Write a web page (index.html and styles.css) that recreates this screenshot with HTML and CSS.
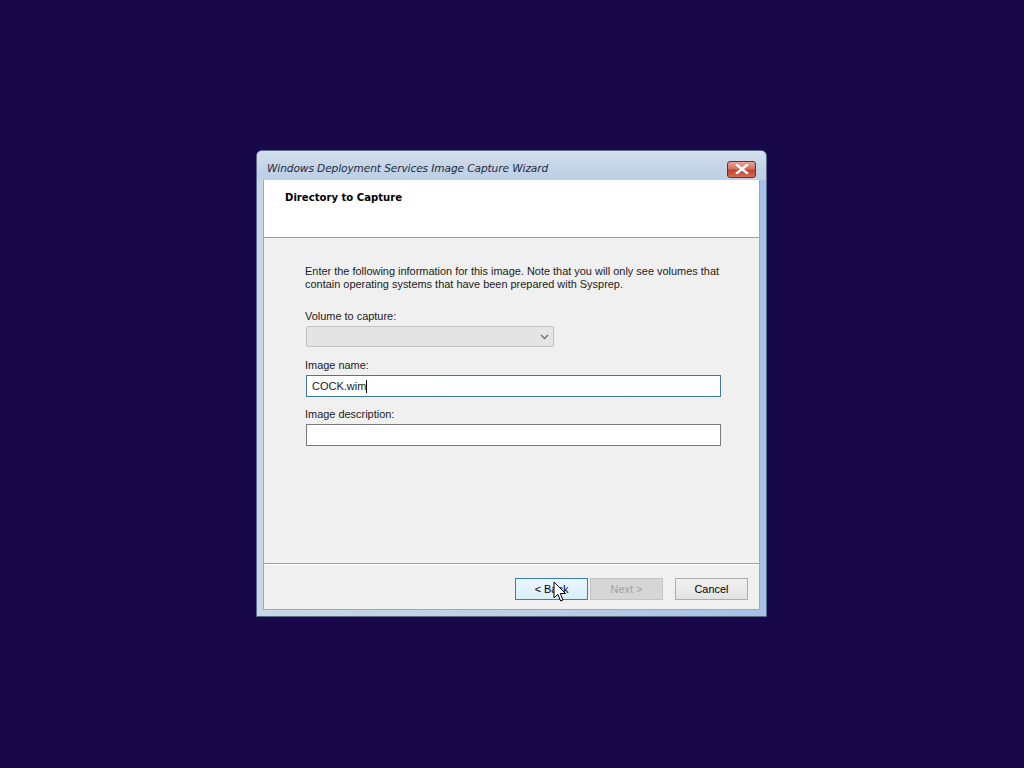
FILE: index.html
```html
<!DOCTYPE html>
<html>
<head>
<meta charset="utf-8">
<title>Windows Deployment Services Image Capture Wizard</title>
<link rel="stylesheet" href="styles.css">
</head>
<body>
<div class="window">
  <div class="titlebar">
    <span class="title">Windows Deployment Services Image Capture Wizard</span>
    <div class="close">
      <svg width="14" height="10" viewBox="0 0 14 10"><path d="M2 1 L12 9 M12 1 L2 9" stroke="#fff" stroke-width="2.4" stroke-linecap="square"/></svg>
    </div>
  </div>
  <div class="client">
    <div class="header">
      <h1 class="heading">Directory to Capture</h1>
    </div>
    <div class="body">
      <p class="intro">Enter the following information for this image. Note that you will only see volumes that contain operating systems that have been prepared with Sysprep.</p>
      <div class="field">
        <label class="label">Volume to capture:</label>
        <div class="combo">
          <svg class="chev" width="9" height="6" viewBox="0 0 9 6"><path d="M1 1 L4.5 4.5 L8 1" fill="none" stroke="#6d6d6d" stroke-width="1.3"/></svg>
        </div>
      </div>
      <div class="field">
        <label class="label">Image name:</label>
        <div class="textbox focused"><span class="value">COCK.wim</span><span class="caret"></span></div>
      </div>
      <div class="field">
        <label class="label">Image description:</label>
        <div class="textbox"></div>
      </div>
    </div>
    <div class="footer">
      <div class="btn back"><span>&lt; Back</span>
        <svg class="cursor" width="14" height="22" viewBox="0 0 14 22"><path d="M1 1 L1 17 L4.8 13.3 L7.6 20 L10 19 L7.3 12.5 L12.5 12.5 Z" fill="#fff" stroke="#000" stroke-width="1"/></svg>
      </div>
      <div class="btn disabled">Next &gt;</div>
      <div class="btn cancel">Cancel</div>
    </div>
  </div>
</div>
</body>
</html>
```
FILE: styles.css
```css
html, body {
  margin: 0;
  padding: 0;
}
body {
  background: #180849;
  height: 768px;
  display: flex;
  align-items: center;
  justify-content: center;
  font-family: "Liberation Sans", Arial, sans-serif;
  font-size: 11px;
  color: #1a1a1a;
}
.window {
  width: 511px;
  height: 467px;
  box-sizing: border-box;
  margin-left: -1px;
  margin-top: -1px;
  border: 1px solid #5a6b85;
  border-radius: 6px 6px 0 0;
  background: linear-gradient(to right, #c9d6e4 0%, #bfd0e4 50%, #a6c0e6 100%);
  padding: 0 6px 6px 6px;
  display: flex;
  flex-direction: column;
}
.titlebar {
  height: 29px;
  display: flex;
  align-items: center;
  justify-content: space-between;
  background: linear-gradient(to bottom, #d3dfec 0%, #c3d3e6 60%, #bdd0e6 100%);
  margin: 0 -6px;
  padding: 0 10px 0 10px;
  border-radius: 5px 5px 0 0;
}
.title {
  font-family: "DejaVu Sans", sans-serif;
  font-style: italic;
  font-size: 10.6px;
  color: #1c2a44;
  margin-top: 5px;
  letter-spacing: -0.1px;
}
.close {
  width: 29px;
  height: 17px;
  margin-top: 7px;
  box-sizing: border-box;
  border: 1px solid #6b2e2a;
  border-radius: 3px;
  background: linear-gradient(to bottom, #e8a496 0%, #d8705e 45%, #c2402a 55%, #d6705a 100%);
  display: flex;
  align-items: center;
  justify-content: center;
}
.client {
  flex: 1;
  background: #f0f0f0;
  border: 1px solid #98aac3;
  border-top: none;
  display: flex;
  flex-direction: column;
}
.header {
  height: 58px;
  background: #fff;
  border-bottom: 1px solid #a0a0a0;
  box-sizing: border-box;
  padding: 12px 0 0 21px;
}
.heading {
  margin: 0;
  font-family: "DejaVu Sans", sans-serif;
  font-size: 10.1px;
  font-weight: bold;
  color: #000;
}
.body {
  flex: 1;
  padding: 27px 40px 0 41px;
}
.intro {
  margin: 0 0 19px 0;
  line-height: 13px;
  font-size: 10.95px;
}
.field {
  display: flex;
  flex-direction: column;
  margin-bottom: 11px;
}
.label {
  line-height: 13px;
  margin-bottom: 3px;
  font-size: 10.95px;
}
.combo {
  width: 248px;
  height: 21px;
  box-sizing: border-box;
  margin-left: 1px;
  margin-bottom: 1px;
  border: 1px solid #c3c3c3;
  border-radius: 2px;
  background: #e4e4e4;
  display: flex;
  align-items: center;
  justify-content: flex-end;
  padding-right: 4px;
}
.textbox {
  width: 415px;
  height: 22px;
  box-sizing: border-box;
  margin-left: 1px;
  border: 1px solid #7a7a7a;
  background: #fff;
  display: flex;
  align-items: center;
  padding-left: 5px;
}
.textbox.focused {
  border-color: #3d7b9e;
  background: linear-gradient(to right, #fff 0%, #fbfdff 100%);
}
.caret {
  width: 1px;
  height: 13px;
  background: #000;
}
.footer {
  height: 46px;
  border-top: 1px solid #a0a0a0;
  box-shadow: inset 0 1px 0 #fff;
  display: flex;
  align-items: flex-start;
  justify-content: flex-end;
  padding: 14px 11px 0 0;
  box-sizing: border-box;
  margin-top: auto;
}
.btn {
  width: 73px;
  height: 22px;
  box-sizing: border-box;
  border: 1px solid #adadad;
  background: linear-gradient(to bottom, #f0f0f0, #e3e3e3);
  display: flex;
  align-items: center;
  justify-content: center;
  font-size: 10.95px;
  color: #000;
  position: relative;
}
.btn.back {
  border-color: #3c7fb1;
  background: linear-gradient(to bottom, #eaf6fd, #d9effa);
  margin-right: 2px;
}
.btn.disabled {
  border-color: #c4c4c4;
  background: #d6d6d6;
  color: #a3a3a3;
  margin-right: 12px;
}
.cursor {
  position: absolute;
  left: 37px;
  top: 2px;
}
```
